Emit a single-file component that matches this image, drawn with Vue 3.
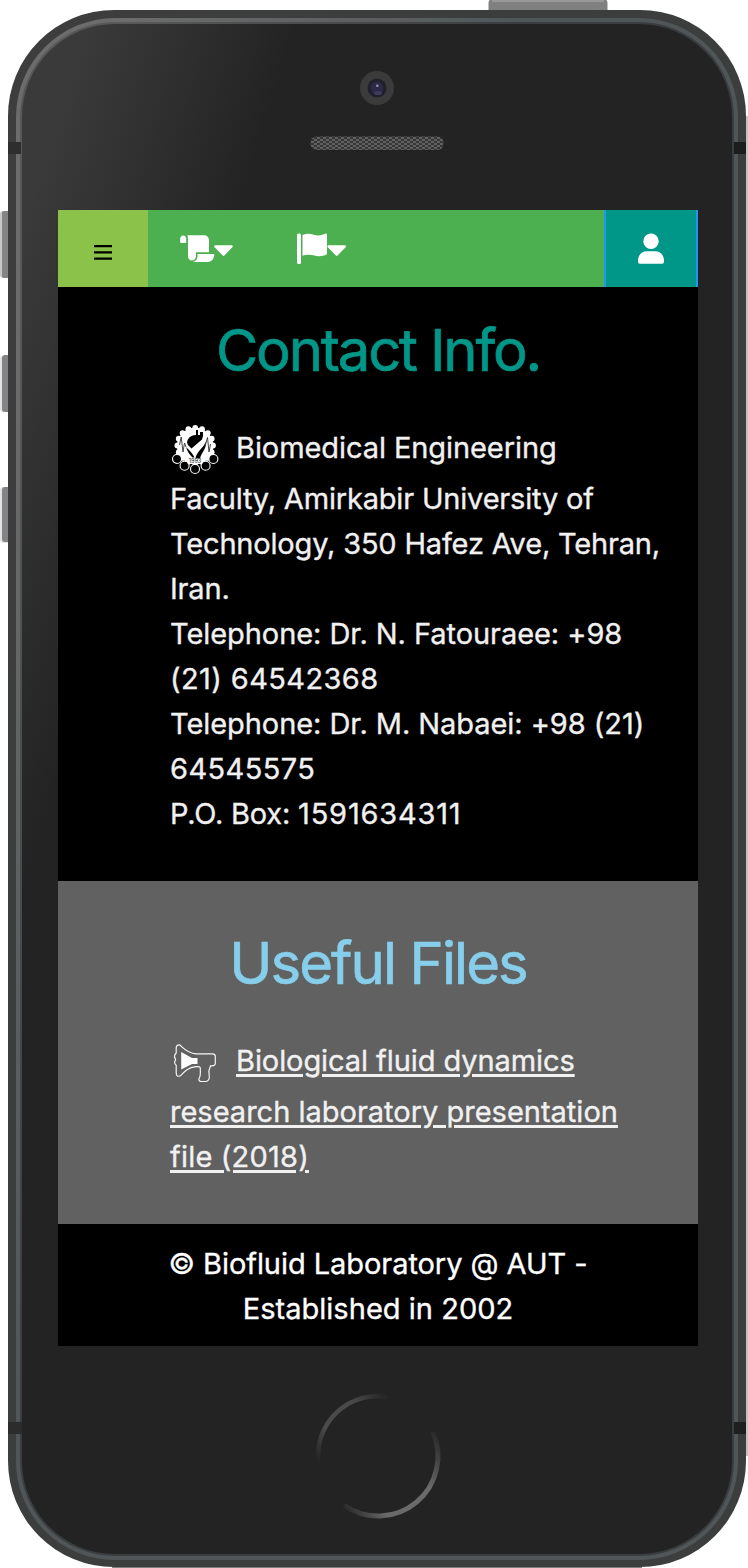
<script setup>
const contactLines = [
  { text: 'Faculty, Amirkabir University of', track: 'tight' },
  { text: 'Technology, 350 Hafez Ave, Tehran,', track: 'tight' },
  { text: 'Iran.', track: 'tight' },
  { text: 'Telephone: Dr. N. Fatouraee: +98', track: 'snug' },
  { text: '(21) 64542368', track: 'digits' },
  { text: 'Telephone: Dr. M. Nabaei: +98 (21)', track: 'snug' },
  { text: '64545575', track: 'digits' },
]
const teeth = Array.from({ length: 16 }, (_, i) => {
  const a = (i * Math.PI) / 8
  return { x: 24.2 + 17.8 * Math.cos(a), y: 20.5 + 17.6 * Math.sin(a) }
})
const rings = [
  { x: 6, y: 34 },
  { x: 13.6, y: 40.8 },
  { x: 24, y: 44 },
  { x: 34.6, y: 40.8 },
  { x: 42.4, y: 34 },
]
</script>

<template>
  <div class="stage">
    <svg class="device" width="748" height="1568" viewBox="0 0 748 1568">
      <defs>
        <linearGradient id="face" gradientUnits="userSpaceOnUse" x1="86" y1="27" x2="278" y2="88">
          <stop offset="0" stop-color="#3a3a3a" />
          <stop offset="0.45" stop-color="#303030" />
          <stop offset="1" stop-color="#232323" />
        </linearGradient>
        <linearGradient id="rim" gradientUnits="userSpaceOnUse" x1="0" y1="200" x2="500" y2="420">
          <stop offset="0" stop-color="#3d3d3d" />
          <stop offset="1" stop-color="#3b3e3d" />
        </linearGradient>
        <linearGradient id="bevel" gradientUnits="userSpaceOnUse" x1="60" y1="200" x2="420" y2="330">
          <stop offset="0" stop-color="#6c6c6c" />
          <stop offset="1" stop-color="#505658" />
        </linearGradient>
        <linearGradient id="bevelIn" gradientUnits="userSpaceOnUse" x1="60" y1="200" x2="420" y2="330">
          <stop offset="0" stop-color="#585858" />
          <stop offset="1" stop-color="#3a3d3f" />
        </linearGradient>
        <linearGradient id="arcA" gradientUnits="userSpaceOnUse" x1="318" y1="1462" x2="388" y2="1396">
          <stop offset="0" stop-color="#4a4a4a" stop-opacity="0" />
          <stop offset="0.3" stop-color="#4a4a4a" />
          <stop offset="0.7" stop-color="#4a4a4a" />
          <stop offset="1" stop-color="#4a4a4a" stop-opacity="0" />
        </linearGradient>
        <linearGradient id="arcB" gradientUnits="userSpaceOnUse" x1="438" y1="1430" x2="342" y2="1510">
          <stop offset="0" stop-color="#6a6a6a" stop-opacity="0" />
          <stop offset="0.35" stop-color="#6a6a6a" />
          <stop offset="0.75" stop-color="#6a6a6a" />
          <stop offset="1" stop-color="#6a6a6a" stop-opacity="0" />
        </linearGradient>
        <pattern id="mesh" patternUnits="userSpaceOnUse" x="311" y="137" width="6" height="4">
          <rect width="6" height="4" fill="#363636" />
          <rect width="3" height="2" fill="#606060" />
          <rect x="3" y="2" width="3" height="2" fill="#606060" />
        </pattern>
      </defs>

      <!-- side and power buttons -->
      <rect x="0" y="211" width="14" height="67" rx="3" fill="#c8c8c8" />
      <rect x="2" y="211" width="12" height="67" rx="2" fill="#858585" />
      <rect x="0" y="356" width="14" height="56" rx="3" fill="#e2e2e2" />
      <rect x="2" y="355" width="12" height="57" rx="3" fill="#838385" />
      <rect x="0" y="487" width="14" height="56" rx="3" fill="#e2e2e2" />
      <rect x="2" y="487" width="12" height="55" rx="3" fill="#838385" />
      <rect x="488.500" y="-2" width="119" height="18" rx="5" fill="#808080" />
      <rect x="492" y="0" width="112" height="2" fill="#999" />

      <!-- body -->
      <rect x="746" y="116" width="2" height="1340" fill="#c4c4c4" />
      <rect x="112" y="1567" width="530" height="1" fill="#7f7f7f" />
      <rect x="8" y="10" width="738" height="1557" rx="106" fill="url(#rim)" />
      <rect x="16" y="18" width="722" height="1542" rx="99" fill="url(#bevel)" />
      <rect x="20" y="22" width="714" height="1534" rx="95" fill="url(#bevelIn)" />
      <rect x="22" y="24" width="710" height="1530" rx="93" fill="url(#face)" />
      <rect x="8" y="142" width="13" height="12" fill="#2e2e2e" />
      <rect x="734" y="142" width="12" height="12" fill="#1b1e1d" />
      <rect x="8" y="1422" width="14" height="12" fill="#2b2c2b" />
      <rect x="734" y="1422" width="12" height="12" fill="#1e1f1f" />

      <!-- camera and speaker -->
      <circle cx="377" cy="88" r="17" fill="#3b3b3b" />
      <circle cx="377" cy="88" r="9.500" fill="#20202a" />
      <circle cx="377" cy="88" r="6.500" fill="#2c2946" />
      <ellipse cx="378" cy="93" rx="4" ry="2" fill="#3e3b60" />
      <circle cx="377.300" cy="85.700" r="1.300" fill="#98949e" />
      <rect x="310.500" y="136.500" width="133" height="13.500" rx="6" fill="url(#mesh)" />

      <!-- home button -->
      <path d="M318.300 1462A60 60 0 0 1 388 1396.800" fill="none" stroke="url(#arcA)" stroke-width="4.500" />
      <path d="M433 1432A60 60 0 0 1 344 1505.500" fill="none" stroke="url(#arcB)" stroke-width="5" />
    </svg>

    <main class="screen">
      <nav class="bar">
        <a class="menu">
          <svg width="20" height="16" viewBox="0 0 20 16"><path d="M1 2.200h18M1 8.400h18M1 14.600h18" stroke="#000" stroke-width="2.300" /></svg>
        </a>
        <a class="item">
          <svg width="54" height="32" viewBox="0 0 54 32" fill="#fff">
            <path d="M3.200 3.500C5 3.500 6.200 5 6.200 6.600V11H1.200Q.2 11 .2 10V6.600C.2 5 1.400 3.500 3.200 3.500Z" />
            <path d="M7.200 3.300H24C27 3.300 29 5.600 29 8.200V20.200H16V24.200C16 26.800 14.200 28.500 12 28.500C9.600 28.500 8 26.700 8 24.200V7Q8 5 7.200 3.300Z" />
            <path d="M17.500 21.900H33.400Q34.500 21.900 34.300 23C33.800 27 31.500 29.900 27.700 29.900H12.800C15.800 29.500 17.500 27 17.500 24.400Z" />
            <path class="round" d="M35.500 14.500H51.500L43.500 22.700Z" />
          </svg>
        </a>
        <a class="item">
          <svg width="50" height="32" viewBox="0 0 50 32" fill="#fff">
            <rect x="0" y="1.500" width="4" height="30.500" rx="1.500" />
            <path d="M5.500 3C12 .2 16 2.500 19.500 3.300C23 4 26 2.600 28.500 1.600Q30 1.200 30 3V22.300C25 25 20.500 24.500 16.500 23.300C12.500 22.200 8.500 22.800 5.500 23.700Z" />
            <path class="round" d="M31.700 14.500H47.700L39.700 22.700Z" />
          </svg>
        </a>
        <a class="user">
          <svg width="28" height="32" viewBox="0 0 28 32" fill="#fff">
            <circle cx="14" cy="9.200" r="7.700" />
            <path d="M10 19.200H18C23.500 19.200 27 23.500 27 28.500V29.700Q27 31.800 25 31.800H3Q1 31.800 1 29.700V28.500C1 23.500 4.500 19.200 10 19.200Z" />
          </svg>
        </a>
      </nav>

      <section class="contact">
        <h1>Contact Info.</h1>
        <div class="lead">
          <svg class="mark" width="50" height="50" viewBox="-1 0 50 50">
            <circle v-for="(t, i) in teeth" :key="i" :cx="t.x" :cy="t.y" r="2.900" fill="#fff" />
            <ellipse cx="24.200" cy="21" rx="18.200" ry="18.200" fill="#fff" />
            <path d="M25 5V10Q20 10 17.500 13.500Q15 17 17 20L20.500 23.500L31 14.500L32 11V7H29V10H27V5Z" fill="#000" />
            <path d="M34.500 16.500C34 22 25.500 26 24.500 33.500H29C30.500 27 36.500 23 34.500 16.500Z" fill="#000" />
            <path d="M15 22Q17 28.500 21.500 32.500H23.500Q21.500 28 15 22Z" fill="#000" />
            <path d="M8.500 20L10.200 12L12 27L13.500 18L15 22M33.500 22L35 18L36.500 12.500L38 27L39.500 19" fill="none" stroke="#333" stroke-width=".9" />
            <circle v-for="r in rings" :key="r.x" :cx="r.x" :cy="r.y" r="4.500" fill="#000" stroke="#fff" stroke-width="1.100" />
            <rect x="16.500" y="33.600" width="15" height="5.200" fill="#fff" />
            <text class="date" x="24" y="38.300" text-anchor="middle" font-size="5.500" fill="#111">1993</text>
          </svg>
          <span class="first">Biomedical Engineering</span>
        </div>
        <div v-for="l in contactLines" :key="l.text" :class="l.track">{{ l.text }}</div>
        <div><span class="box">P.O. Box: </span><span class="code">1591634311</span></div>
      </section>

      <section class="files">
        <h1>Useful Files</h1>
        <a class="link">
          <span class="lead">
            <svg class="mark" width="50" height="50" viewBox="0 0 50 50" fill="none" stroke="#f6f6f6" stroke-width="1.200">
              <path d="M6.200 15V9.500Q6.800 6.500 9.500 6.800C13 9.500 17 15.500 26 15.800H42.500Q45.300 15.800 45.300 18.500V25Q45.300 27.800 42 27.800H40.500C39 31 38.500 34 39.200 37.500C39.800 41 38.500 43.500 35.500 43.500H31.500Q28.500 43.500 29 40.500C31 38 30.500 34 30.200 29.500Q29.500 28.300 26 28.700C18 29.500 14.500 33.500 10.500 37.800Q6.300 39.500 6.200 35V27.300Q4.600 26.500 4.600 24.300L5.600 21.500L4.500 19Q4.500 16.300 6.200 15Z" />
              <path d="M11.200 14L22 20H27.500V26H22L11.200 31.500Z" fill="#fff" stroke="none" />
            </svg>
            <u class="first">Biological fluid dynamics</u>
          </span>
          <u>research laboratory presentation</u>
          <u class="year">file (2018)</u>
        </a>
      </section>

      <footer class="foot">
        <div class="snug">© Biofluid Laboratory @ AUT -</div>
        <div class="est">Established in 2002</div>
      </footer>
    </main>
  </div>
</template>

<style>
body { background: #fff; }
</style>

<style scoped>
.stage {
  display: grid;
  width: 748px;
  height: 1568px;
  overflow: hidden;
  font-family: Inter, "Liberation Sans", sans-serif;
  font-size: 29px;
  font-weight: 400;
  line-height: 45px;
  color: #f1f1f1;
}
.device, .screen { grid-area: 1 / 1; }
.device { display: block; }
.screen {
  width: 640px;
  height: 1136px;
  margin: 210px 0 0 58px;
  background: #000;
  white-space: nowrap;
  -webkit-text-stroke: 0.350px;
}
.bar {
  display: flex;
  height: 77px;
  background: #4caf50;
}
.bar svg { display: block; }
.menu {
  width: 90px;
  padding: 34px 0 0 35px;
  box-sizing: border-box;
  background: #8bc34a;
}
.item { padding: 22px 0 0 32px; width: 85px; }
.round { stroke: #fff; stroke-width: 2.500; stroke-linejoin: round; }
.user {
  width: 94px;
  margin-left: auto;
  padding: 22px 0 0 31px;
  box-sizing: border-box;
  background: #009688;
  border: solid #2196f3;
  border-width: 0 2px;
}
section { padding: 0 0 45px 112px; }
h1 {
  margin: 0 0 35px -112px;
  font-size: 58px;
  line-height: 80px;
  font-weight: 400;
  text-align: center;
  -webkit-text-stroke: 0.700px;
}
.contact { padding-top: 23px; }
.contact h1 { color: #009688; letter-spacing: -2.200px; }
.files { padding-top: 42px; background: #616161; }
.files h1 { color: #87ceeb; letter-spacing: -1.900px; }
.lead { display: flex; height: 51px; }
.mark { flex: none; margin-right: 16px; }
.date { -webkit-text-stroke: 0; }
.first { letter-spacing: -0.080px; }
.tight { letter-spacing: -0.180px; }
.snug { letter-spacing: -0.060px; }
.digits { letter-spacing: 0.400px; }
.box { white-space: pre; letter-spacing: -0.200px; }
.code { letter-spacing: 0.800px; }
.link { display: flex; flex-direction: column; align-items: flex-start; }
u { text-underline-offset: 3px; text-decoration-thickness: 2.500px; }
.year { letter-spacing: 0.200px; }
.foot { padding-top: 17px; text-align: center; color: #fff; }
.est { letter-spacing: 0.030px; }
</style>
